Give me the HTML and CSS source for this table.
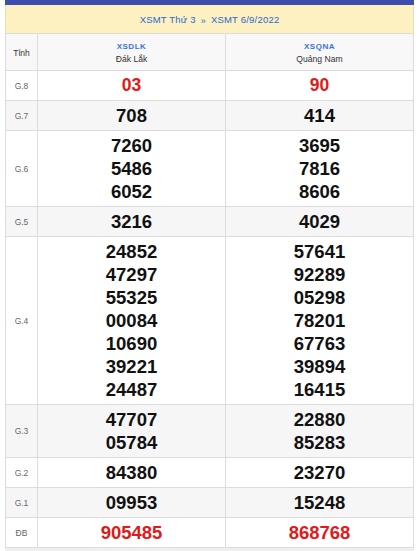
FILE: index.html
```html
<!DOCTYPE html>
<html lang="vi">
<head>
<meta charset="utf-8">
<title>XSMT 6/9/2022</title>
<link rel="stylesheet" href="styles.css">
</head>
<body>
<div class="wrap">
  <div class="topbar"></div>
  <div class="title">
    <a class="link">XSMT Thứ 3</a>
    <span class="sep">»</span>
    <a class="link">XSMT 6/9/2022</a>
  </div>
  <table class="kq">
    <colgroup>
      <col class="c-label">
      <col class="c-prov">
      <col class="c-prov">
    </colgroup>
    <thead>
      <tr>
        <th class="lbl-head">Tỉnh</th>
        <th><span class="code">XSDLK</span><span class="pname">Đák Lắk</span></th>
        <th><span class="code">XSQNA</span><span class="pname">Quảng Nam</span></th>
      </tr>
    </thead>
    <tbody>
      <tr>
        <td class="lbl">G.8</td>
        <td class="num red small">03</td>
        <td class="num red small">90</td>
      </tr>
      <tr class="alt">
        <td class="lbl">G.7</td>
        <td class="num">708</td>
        <td class="num">414</td>
      </tr>
      <tr>
        <td class="lbl">G.6</td>
        <td class="num"><div>7260</div><div>5486</div><div>6052</div></td>
        <td class="num"><div>3695</div><div>7816</div><div>8606</div></td>
      </tr>
      <tr class="alt">
        <td class="lbl">G.5</td>
        <td class="num">3216</td>
        <td class="num">4029</td>
      </tr>
      <tr>
        <td class="lbl">G.4</td>
        <td class="num"><div>24852</div><div>47297</div><div>55325</div><div>00084</div><div>10690</div><div>39221</div><div>24487</div></td>
        <td class="num"><div>57641</div><div>92289</div><div>05298</div><div>78201</div><div>67763</div><div>39894</div><div>16415</div></td>
      </tr>
      <tr class="alt">
        <td class="lbl">G.3</td>
        <td class="num"><div>47707</div><div>05784</div></td>
        <td class="num"><div>22880</div><div>85283</div></td>
      </tr>
      <tr>
        <td class="lbl">G.2</td>
        <td class="num">84380</td>
        <td class="num">23270</td>
      </tr>
      <tr class="alt">
        <td class="lbl">G.1</td>
        <td class="num">09953</td>
        <td class="num">15248</td>
      </tr>
      <tr>
        <td class="lbl">ĐB</td>
        <td class="num red">905485</td>
        <td class="num red">868768</td>
      </tr>
    </tbody>
  </table>
  <div class="after"></div>
</div>
</body>
</html>
```
FILE: styles.css
```css
html, body {
  margin: 0;
  padding: 0;
  background: #ffffff;
}
body {
  font-family: "Liberation Sans", Arial, sans-serif;
  color: #222;
}
.wrap {
  margin: 0 5px;
}
.topbar {
  height: 5px;
  background: #3d4fae;
}
.title {
  height: 28px;
  background: #fdf1c2;
  border-left: 1px solid #e8dfbf;
  border-right: 1px solid #e8dfbf;
  display: flex;
  align-items: center;
  justify-content: center;
  gap: 5px;
  font-size: 9.5px;
  letter-spacing: 0.2px;
}
.title .link {
  color: #2a68d0;
}
.title .sep {
  color: #2a68d0;
  font-size: 9px;
  padding-top: 3px;
}
.kq {
  width: 409px;
  border-collapse: collapse;
  table-layout: fixed;
}
.c-label { width: 32px; }
.kq th, .kq td {
  border: 1px solid #dcdcdc;
  text-align: center;
  vertical-align: middle;
}
.kq thead th {
  background: #f8f8f8;
  padding: 5px 0 4px;
  height: 27px;
  font-weight: normal;
}
.lbl-head {
  font-size: 8.5px;
  color: #333;
}
.code {
  display: block;
  color: #3a73d6;
  font-size: 8px;
  line-height: 13px;
  letter-spacing: 0.5px;
  font-weight: bold;
}
.pname {
  display: block;
  color: #333;
  font-size: 8.6px;
  line-height: 13px;
}
.kq td.lbl {
  font-size: 8.5px;
  color: #666;
}
.kq td.num {
  padding: 3px 0;
  font-size: 18.5px;
  line-height: 23px;
  font-weight: bold;
  color: #111;
}
.kq td.red {
  color: #e11919;
}
.kq td.small {
  font-size: 17.5px;
}
.kq tr.alt td {
  background: #f6f6f6;
}
.after {
  height: 10px;
  background: #efefef;
}
```
